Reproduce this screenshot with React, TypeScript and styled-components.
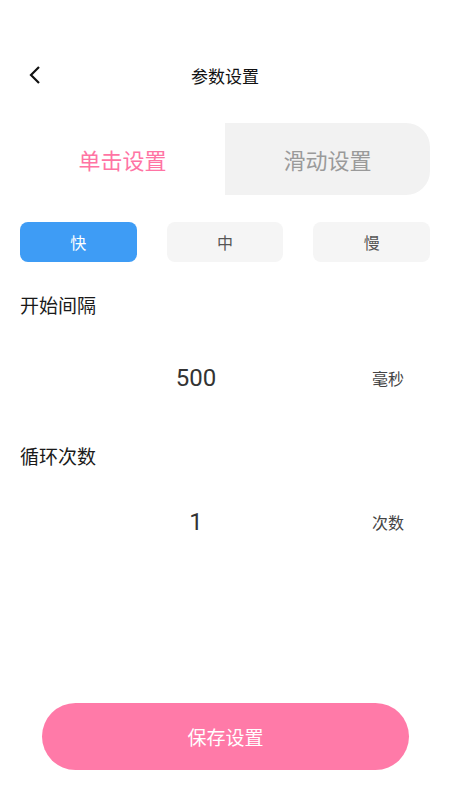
import React, { useState } from 'react';
import styled, { createGlobalStyle } from 'styled-components';

const Global = createGlobalStyle`
  html, body {
    margin: 0;
    padding: 0;
    background: #fff;
  }
  body {
    font-family: Roboto, "Noto Sans CJK SC", sans-serif;
  }
`;

const Page = styled.div`
  width: 450px;
  height: 800px;
  box-sizing: border-box;
  padding: 50px 20px 30px;
  display: flex;
  flex-direction: column;
`;

const Header = styled.div`
  height: 50px;
  display: flex;
  align-items: center;
  justify-content: center;
  position: relative;
  font-size: 17px;
  color: #111;
`;

const Back = styled.button`
  position: absolute;
  left: 3px;
  top: 13px;
  width: 24px;
  height: 24px;
  padding: 0;
  border: none;
  background: none;
  display: flex;
  align-items: center;
  justify-content: center;
`;

const Tabs = styled.div`
  margin-top: 23px;
  height: 72px;
  display: flex;
`;

const Tab = styled.div<{ $active: boolean }>`
  flex: 1;
  display: flex;
  align-items: center;
  justify-content: center;
  font-size: 22px;
  color: ${p => (p.$active ? '#ff74a4' : '#9a9a9a')};
  background: ${p => (p.$active ? '#fff' : '#f2f2f2')};
  border-radius: ${p => (p.$active ? '0' : '0 24px 24px 0')};
`;

const SpeedRow = styled.div`
  margin-top: 27px;
  display: grid;
  grid-template-columns: repeat(3, 1fr);
  gap: 30px;
`;

const Speed = styled.div<{ $active: boolean }>`
  height: 40px;
  border-radius: 8px;
  display: flex;
  align-items: center;
  justify-content: center;
  font-size: 16px;
  color: ${p => (p.$active ? '#fff' : '#555')};
  background: ${p => (p.$active ? '#3e9cf5' : '#f5f5f5')};
`;

const Label = styled.div<{ $top: number }>`
  margin-top: ${p => p.$top}px;
  height: 26px;
  line-height: 26px;
  font-size: 19px;
  color: #1a1a1a;
`;

const ValueRow = styled.div<{ $top: number }>`
  margin-top: ${p => p.$top}px;
  height: 40px;
  display: flex;
  align-items: center;
`;

const Value = styled.div`
  flex: 1;
  text-align: center;
  font-size: 24px;
  color: #333;
`;

const Unit = styled.div`
  width: 58px;
  font-size: 16px;
  color: #444;
`;

const Spacer = styled.div`
  flex: 1;
`;

const Save = styled.button`
  margin: 0 21px 0 22px;
  height: 67px;
  border: none;
  border-radius: 34px;
  background: #ff7aa8;
  color: #fff;
  font-size: 19px;
  font-family: inherit;
`;

export default function App() {
  const [tab, setTab] = useState(0);
  const [speed, setSpeed] = useState(0);

  return (
    <Page>
      <Global />
      <Header>
        <Back>
          <svg width='14' height='20' viewBox='0 0 14 20'>
            <path d='M11 2 L3 10 L11 18' fill='none' stroke='#111' strokeWidth='2.2' />
          </svg>
        </Back>
        参数设置
      </Header>
      <Tabs>
        {['单击设置', '滑动设置'].map((t, i) => (
          <Tab key={t} $active={tab === i} onClick={() => setTab(i)}>
            {t}
          </Tab>
        ))}
      </Tabs>
      <SpeedRow>
        {['快', '中', '慢'].map((s, i) => (
          <Speed key={s} $active={speed === i} onClick={() => setSpeed(i)}>
            {s}
          </Speed>
        ))}
      </SpeedRow>
      <Label $top={32}>开始间隔</Label>
      <ValueRow $top={38}>
        <Value>500</Value>
        <Unit>毫秒</Unit>
      </ValueRow>
      <Label $top={47}>循环次数</Label>
      <ValueRow $top={31}>
        <Value>1</Value>
        <Unit>次数</Unit>
      </ValueRow>
      <Spacer />
      <Save>保存设置</Save>
    </Page>
  );
}
